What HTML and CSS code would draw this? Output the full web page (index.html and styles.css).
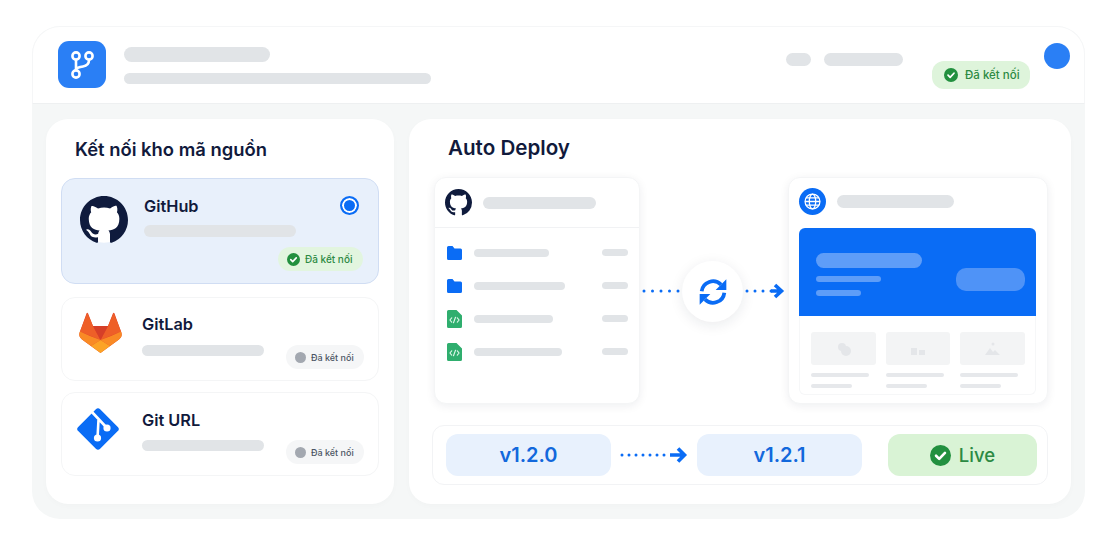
FILE: index.html
```html
<!DOCTYPE html>
<html lang="vi">
<head>
  <meta charset="UTF-8" />
  <meta name="viewport" content="width=device-width, initial-scale=1.0"/>
  <title>Auto Deploy</title>
  <link rel="stylesheet" href="styles.css">
</head>
<body>
  <svg class="sprite" aria-hidden="true">
    <symbol id="octocat" viewBox="0 0 16 16">
      <circle cx="8" cy="8" r="7.6" fill="#fff"/>
      <path fill="#0f1b3d" fill-rule="evenodd" d="M8 0C3.58 0 0 3.58 0 8c0 3.54 2.29 6.53 5.47 7.59.4.07.55-.17.55-.38 0-.19-.01-.82-.01-1.49-2.01.37-2.53-.49-2.69-.94-.09-.23-.48-.94-.82-1.13-.28-.15-.68-.52-.01-.53.63-.01 1.08.58 1.23.82.72 1.21 1.87.87 2.33.66.07-.52.28-.87.51-1.07-1.78-.2-3.64-.89-3.64-3.95 0-.87.31-1.59.82-2.15-.08-.2-.36-1.02.08-2.12 0 0 .67-.21 2.2.82.64-.18 1.32-.27 2-.27.68 0 1.36.09 2 .27 1.53-1.04 2.2-.82 2.2-.82.44 1.1.16 1.92.08 2.12.51.56.82 1.27.82 2.15 0 3.07-1.87 3.75-3.65 3.95.29.25.54.73.54 1.48 0 1.07-.01 1.93-.01 2.2 0 .21.15.46.55.38A8.013 8.013 0 0016 8c0-4.42-3.58-8-8-8z"/>
    </symbol>
    <symbol id="check" viewBox="0 0 16 16">
      <circle cx="8" cy="8" r="8" fill="#22903f"/>
      <path d="M4.6 8.2l2.4 2.4 4.4-4.6" fill="none" stroke="#fff" stroke-width="2" stroke-linecap="round" stroke-linejoin="round"/>
    </symbol>
    <symbol id="folder" viewBox="0 0 15 14">
      <path fill="#0a6cf5" d="M1.5 0h4l2 2.500h6A1.500 1.500 0 0 1 15 4v8.500a1.500 1.500 0 0 1-1.500 1.500h-12A1.500 1.500 0 0 1 0 12.500v-11A1.500 1.500 0 0 1 1.500 0z"/>
    </symbol>
    <symbol id="codefile" viewBox="0 0 15 18">
      <path fill="#2fae6e" d="M1.500 0H9.500L15 5.500V16.500A1.500 1.500 0 0 1 13.500 18H1.500A1.500 1.500 0 0 1 0 16.500V1.500A1.500 1.500 0 0 1 1.500 0z"/>
      <path d="M4.700 7.800L2.900 10l1.800 2.200M10.300 7.800L12.100 10l-1.800 2.200M8.500 7.200L6.500 12.800" fill="none" stroke="#dff7e9" stroke-width="1.100" stroke-linecap="round" stroke-linejoin="round"/>
    </symbol>
  </svg>

  <div class="frame">
    <header class="topbar">
      <div class="logo">
        <svg viewBox="0 0 48 47" width="48" height="47">
          <g fill="none" stroke="#fff" stroke-width="2.600" stroke-linecap="round">
            <circle cx="18" cy="15" r="3.600"/>
            <circle cx="31" cy="15" r="3.600"/>
            <circle cx="18" cy="33" r="3.600"/>
            <path d="M18 19v10M31 19c0 5-3 6-6 6.500-3 .5-6 1-7 2.500"/>
          </g>
        </svg>
      </div>
      <div class="topbar-text">
        <div class="bar bar-title"></div>
        <div class="bar bar-subtitle"></div>
      </div>
      <div class="topbar-right">
        <div class="bar bar-nav-a"></div>
        <div class="bar bar-nav-b"></div>
        <div class="status status-top">
          <svg class="status-icon"><use href="#check"/></svg>
          <span>Đã kết nối</span>
        </div>
        <div class="avatar"></div>
      </div>
    </header>

    <main class="workspace">
      <section class="panel repos">
        <h2 class="repos-title">Kết nối kho mã nguồn</h2>

        <div class="provider provider-active">
          <svg class="provider-icon octo"><use href="#octocat"/></svg>
          <div class="provider-main">
            <div class="provider-name">GitHub</div>
            <div class="bar bar-provider-long"></div>
          </div>
          <div class="provider-side">
            <div class="radio"></div>
            <div class="status status-card">
              <svg class="status-icon"><use href="#check"/></svg>
              <span>Đã kết nối</span>
            </div>
          </div>
        </div>

        <div class="provider provider-lab">
          <svg class="provider-icon tanuki" viewBox="0 0 43 41">
            <path fill="#e24329" d="M7.500 1.500c.3-1 1.200-1 1.600 0L14 14h15l4.900-12.500c.4-1 1.300-1 1.600 0l6.500 18c1.500 3.500.5 6-2 8L21.500 41 3 27.500c-2.500-2-3.500-4.500-2-8z"/>
            <path fill="#ee5f28" d="M8.300.800L14 14l7.500 14L1 19.500zM34.700.800L29 14l-7.500 14L42 19.500z"/>
            <path fill="#d63f28" d="M14 14h15l-7.500 14z"/>
            <path fill="#f98a25" d="M1 19.500l10 4.500 10.500 4L12 34 3 27.500c-2.500-2-3.500-4.500-2-8zM42 19.500L32 24l-10.500 4L31 34l9-6.500c2.500-2 3.500-4.500 2-8z"/>
            <path fill="#fca326" d="M12 34l9.500-6 9.500 6-9.500 7z"/>
          </svg>
          <div class="provider-main">
            <div class="provider-name">GitLab</div>
            <div class="bar bar-provider"></div>
          </div>
          <div class="provider-side">
            <div class="status status-off">
              <span class="status-dot"></span>
              <span>Đã kết nối</span>
            </div>
          </div>
        </div>

        <div class="provider provider-url">
          <svg class="provider-icon gitmark" viewBox="0 0 44 44">
            <rect x="6.500" y="6.500" width="31" height="31" rx="3" fill="#0a6cf5" transform="rotate(45 22 22)"/>
            <path d="M15 4l16 17M22.500 13L21.500 31" fill="none" stroke="#fff" stroke-width="2.600"/>
            <circle cx="31" cy="21" r="3.600" fill="#fff"/>
            <circle cx="21.500" cy="31" r="3.600" fill="#fff"/>
          </svg>
          <div class="provider-main">
            <div class="provider-name">Git URL</div>
            <div class="bar bar-provider"></div>
          </div>
          <div class="provider-side">
            <div class="status status-off">
              <span class="status-dot"></span>
              <span>Đã kết nối</span>
            </div>
          </div>
        </div>
      </section>

      <section class="panel deploy">
        <h2 class="deploy-title">Auto Deploy</h2>

        <div class="pipeline">
          <div class="box repo-box">
            <div class="repo-head">
              <svg class="repo-logo"><use href="#octocat"/></svg>
              <div class="bar bar-repo"></div>
            </div>
            <div class="file-list">
              <div class="file-row">
                <svg class="file-icon"><use href="#folder"/></svg>
                <div class="bar file-name name-a"></div>
                <div class="bar file-meta"></div>
              </div>
              <div class="file-row">
                <svg class="file-icon"><use href="#folder"/></svg>
                <div class="bar file-name name-b"></div>
                <div class="bar file-meta"></div>
              </div>
              <div class="file-row">
                <svg class="file-icon file-code"><use href="#codefile"/></svg>
                <div class="bar file-name name-c"></div>
                <div class="bar file-meta"></div>
              </div>
              <div class="file-row">
                <svg class="file-icon file-code"><use href="#codefile"/></svg>
                <div class="bar file-name name-d"></div>
                <div class="bar file-meta"></div>
              </div>
            </div>
          </div>

          <div class="flow">
            <svg class="flow-dots" viewBox="0 0 40 8">
              <path d="M2 4h36" stroke="#0a6cf5" stroke-width="3" stroke-linecap="round" stroke-dasharray="0 8.500" fill="none"/>
            </svg>
            <div class="sync">
              <svg viewBox="0 0 24 24" width="32" height="32">
                <path d="M3.500 11.500A8.500 8.500 0 0 1 18 6.500M20.500 12.500A8.500 8.500 0 0 1 6 17.500" fill="none" stroke="#0a6cf5" stroke-width="2.800"/>
                <path d="M22 2.500v8h-8zM2 21.500v-8h8z" fill="#0a6cf5"/>
              </svg>
            </div>
            <svg class="flow-arrow" viewBox="0 0 40 16">
              <path d="M2 8h26" stroke="#0a6cf5" stroke-width="3" stroke-linecap="round" stroke-dasharray="0 8" fill="none"/>
              <path d="M26 8h9M30 2l6.500 6-6.500 6" stroke="#0a6cf5" stroke-width="3.600" fill="none"/>
            </svg>
          </div>

          <div class="box site-box">
            <div class="site-head">
              <div class="globe">
                <svg viewBox="0 0 16 16" width="17" height="17">
                  <g fill="none" stroke="#fff" stroke-width="1.200">
                    <circle cx="8" cy="8" r="7"/>
                    <ellipse cx="8" cy="8" rx="3" ry="7"/>
                    <path d="M1 8h14M2 4.500h12M2 11.500h12"/>
                  </g>
                </svg>
              </div>
              <div class="bar bar-site"></div>
            </div>
            <div class="hero">
              <div class="hero-text">
                <div class="hero-bar hero-bar-a"></div>
                <div class="hero-bar hero-bar-b"></div>
                <div class="hero-bar hero-bar-c"></div>
              </div>
              <div class="hero-btn"></div>
            </div>
            <div class="thumbs">
              <div class="thumb">
                <div class="thumb-img">
                  <svg viewBox="0 0 16 14" width="16" height="14"><circle cx="6" cy="5" r="4" fill="#e4e6e9"/><circle cx="10" cy="9" r="5" fill="#e4e6e9"/></svg>
                </div>
                <div class="thumb-line"></div>
                <div class="thumb-line thumb-line-short"></div>
              </div>
              <div class="thumb">
                <div class="thumb-img">
                  <svg viewBox="0 0 16 14" width="16" height="14"><path d="M1 6h6v7H1zM9 8h6v5H9z" fill="#e4e6e9"/></svg>
                </div>
                <div class="thumb-line"></div>
                <div class="thumb-line thumb-line-short"></div>
              </div>
              <div class="thumb">
                <div class="thumb-img">
                  <svg viewBox="0 0 16 14" width="16" height="14"><circle cx="8" cy="2" r="1.500" fill="#e4e6e9"/><path d="M0 13l5-7 3 4 2-2 5 5z" fill="#e4e6e9"/></svg>
                </div>
                <div class="thumb-line"></div>
                <div class="thumb-line thumb-line-short"></div>
              </div>
            </div>
          </div>
        </div>

        <div class="versions">
          <div class="version">v1.2.0</div>
          <svg class="version-arrow" viewBox="0 0 68 16">
            <path d="M2 8h48" stroke="#0a6cf5" stroke-width="3" stroke-linecap="round" stroke-dasharray="0 7" fill="none"/>
            <path d="M50 8h14M58 1.500l6.500 6.500-6.500 6.500" stroke="#0a6cf5" stroke-width="3.600" fill="none"/>
          </svg>
          <div class="version">v1.2.1</div>
          <div class="live">
            <svg class="live-icon"><use href="#check"/></svg>
            <span>Live</span>
          </div>
        </div>
      </section>
    </main>
  </div>
</body>
</html>
```

FILE: styles.css
```css
* {
  margin: 0;
  padding: 0;
  box-sizing: border-box;
}

body {
  font-family: "Inter", "Noto Sans", sans-serif;
  background: #ffffff;
  color: #111a3c;
}

.sprite {
  display: none;
}

.frame {
  width: 1053px;
  height: 493px;
  margin: 26px 0 0 32px;
  background: #f5f7f7;
  border-radius: 28px;
  overflow: hidden;
}

.bar {
  background: #e1e4e7;
  border-radius: 8px;
}

/* top bar */
.topbar {
  display: flex;
  align-items: flex-start;
  height: 78px;
  padding: 14px 14px 0 25px;
  background: #ffffff;
  border: 1px solid #f5f6f7;
  border-bottom: 1px solid #eef0f1;
  border-radius: 28px 28px 0 0;
}

.logo {
  width: 48px;
  height: 47px;
  background: #2a7ff5;
  border-radius: 11px;
}

.topbar-text {
  margin: 6px 0 0 18px;
}

.bar-title {
  width: 146px;
  height: 15px;
}

.bar-subtitle {
  width: 307px;
  height: 11px;
  margin-top: 11px;
}

.topbar-right {
  display: flex;
  align-items: flex-start;
  margin-left: auto;
}

.bar-nav-a {
  width: 25px;
  height: 13px;
  margin-top: 12px;
}

.bar-nav-b {
  width: 79px;
  height: 13px;
  margin: 12px 0 0 13px;
}

.status {
  display: flex;
  align-items: center;
  border-radius: 12px;
  white-space: nowrap;
  font-weight: 500;
}

.status-top {
  width: 98px;
  height: 28px;
  margin: 20px 0 0 29px;
  padding-left: 12px;
  gap: 7px;
  background: #def4db;
  color: #2c8a43;
  font-size: 11.500px;
}

.status-top .status-icon {
  width: 14px;
  height: 14px;
}

.avatar {
  width: 26px;
  height: 26px;
  margin: 2px 0 0 14px;
  background: #2a7ff5;
  border-radius: 50%;
}

/* panels */
.workspace {
  display: grid;
  grid-template-columns: 348px 662px;
  gap: 15px;
  padding: 15px 14px;
}

.panel {
  height: 385px;
  background: #ffffff;
  border-radius: 22px;
  box-shadow: 0 2px 6px rgba(20, 30, 60, 0.02);
}

/* repo list */
.repos {
  padding: 18px 15px 0;
}

.repos-title {
  padding-left: 14px;
  margin-bottom: 17px;
  font-size: 18.400px;
  line-height: 24px;
  font-weight: 600;
}

.provider {
  display: flex;
  align-items: flex-start;
  background: #ffffff;
  border: 1px solid #f4f5f6;
  border-radius: 14px;
}

.provider-active {
  height: 106px;
  padding: 17px 15px 12px 18px;
  margin-bottom: 13px;
  background: #e8f0fb;
  border-color: #d0ddf3;
}

.provider-lab {
  height: 84px;
  padding: 14px 14px 11px 17px;
  margin-bottom: 11px;
}

.provider-url {
  height: 84px;
  padding: 14px 14px 11px 14px;
}

.provider-icon {
  flex: none;
}

.octo {
  width: 48px;
  height: 48px;
  margin-right: 16px;
}

.tanuki {
  width: 43px;
  height: 41px;
  margin-right: 20px;
}

.gitmark {
  width: 44px;
  height: 44px;
  margin-right: 22px;
}

.provider-name {
  font-size: 16.300px;
  line-height: 20px;
  font-weight: 600;
}

/* the long bar runs above the badge, so it takes no room from it */
.provider-active .provider-main {
  margin-right: -18px;
}

.provider-lab .provider-main {
  margin-top: 2px;
}

.provider-url .provider-main {
  margin-top: 3px;
}

.bar-provider-long {
  width: 152px;
  height: 12px;
  margin-top: 9px;
}

.bar-provider {
  width: 122px;
  height: 11px;
  margin-top: 11px;
}

.provider-url .bar-provider {
  margin-top: 10px;
}

.provider-side {
  display: flex;
  flex-direction: column;
  align-items: flex-end;
  justify-content: flex-end;
  height: 100%;
  margin-left: auto;
}

.provider-active .provider-side {
  justify-content: space-between;
}

.radio {
  width: 19px;
  height: 19px;
  margin-right: 4px;
  background: #0a6cf5;
  border: 2.500px solid #0a6cf5;
  box-shadow: inset 0 0 0 2px #ffffff;
  border-radius: 50%;
}

.status-card {
  width: 85px;
  height: 24px;
  padding-left: 9px;
  gap: 5px;
  background: #e2f5df;
  color: #2c8a43;
  font-size: 10px;
}

.status-card .status-icon {
  width: 13px;
  height: 13px;
}

.status-off {
  width: 78px;
  height: 24px;
  padding-left: 9px;
  gap: 5px;
  background: #f5f6f7;
  color: #4b5563;
  font-size: 9px;
}

.status-dot {
  width: 11px;
  height: 11px;
  background: #a3a8b0;
  border-radius: 50%;
}

/* deploy */
.deploy {
  padding: 16px 23px 0 25px;
}

.deploy-title {
  padding-left: 14px;
  margin-bottom: 16px;
  font-size: 20.600px;
  line-height: 26px;
  font-weight: 600;
}

.pipeline {
  display: flex;
  height: 227px;
}

.box {
  flex: none;
  background: #ffffff;
  border: 1px solid #f4f5f6;
  border-radius: 12px;
  box-shadow: 0 2px 10px rgba(20, 30, 60, 0.07);
}

.repo-box {
  width: 206px;
}

.repo-head {
  display: flex;
  align-items: center;
  gap: 11px;
  height: 50px;
  padding-left: 10px;
  border-bottom: 1px solid #f1f2f4;
}

.repo-logo {
  width: 27px;
  height: 27px;
}

.bar-repo {
  width: 113px;
  height: 12px;
}

.file-list {
  padding-top: 8px;
}

.file-row {
  display: flex;
  align-items: center;
  height: 33px;
  padding: 0 11px 0 12px;
}

.file-icon {
  flex: none;
  width: 15px;
  height: 14px;
  margin-right: 12px;
}

.file-code {
  height: 18px;
}

.file-name {
  height: 8px;
}

.name-a { width: 75px; }
.name-b { width: 91px; }
.name-c { width: 79px; }
.name-d { width: 88px; }

.file-meta {
  width: 26px;
  height: 7px;
  margin-left: auto;
}

.flow {
  flex: 1;
  display: flex;
  align-items: center;
  padding-left: 2px;
}

.flow-dots {
  width: 40px;
  height: 8px;
}

.sync {
  display: flex;
  align-items: center;
  justify-content: center;
  flex: none;
  width: 61px;
  height: 61px;
  margin: 2px 2px 0 0;
  background: #ffffff;
  border-radius: 50%;
  box-shadow: 0 3px 14px rgba(20, 30, 60, 0.09);
}

.flow-arrow {
  width: 40px;
  height: 16px;
}

.site-box {
  width: 260px;
  padding: 0 11px 0 10px;
}

.site-head {
  display: flex;
  align-items: center;
  gap: 11px;
  height: 50px;
  padding-bottom: 3px;
}

.globe {
  display: flex;
  align-items: center;
  justify-content: center;
  width: 27px;
  height: 27px;
  background: #0a6cf5;
  border-radius: 50%;
}

.bar-site {
  width: 117px;
  height: 13px;
}

.hero {
  display: flex;
  justify-content: space-between;
  height: 88px;
  padding: 25px 11px 0 17px;
  background: #0a6cf5;
  border-radius: 6px 6px 0 0;
}

.hero-bar {
  background: #5e9df8;
  border-radius: 8px;
  height: 6px;
  margin-bottom: 8px;
}

.hero-bar-a { width: 106px; height: 15px; }
.hero-bar-b { width: 65px; }
.hero-bar-c { width: 45px; }

.hero-btn {
  width: 69px;
  height: 23px;
  margin-top: 15px;
  background: #4f93f7;
  border-radius: 10px;
}

.thumbs {
  display: grid;
  grid-template-columns: 65px 64px 65px;
  gap: 10px;
  height: 79px;
  padding: 16px 10px 0 11px;
  border: 1px solid #f6f7f8;
  border-top: none;
  border-radius: 0 0 6px 6px;
}

.thumb-img {
  display: flex;
  align-items: center;
  justify-content: center;
  height: 33px;
  margin-bottom: 8px;
  background: #f3f4f5;
  border-radius: 3px;
}

.thumb-line {
  width: 58px;
  height: 4px;
  margin-bottom: 7px;
  background: #e6e8eb;
  border-radius: 2px;
}

.thumb-line-short {
  width: 41px;
}

/* version strip */
.versions {
  display: flex;
  align-items: center;
  width: 616px;
  height: 60px;
  margin: 21px 0 0 -2px;
  padding: 0 10px 0 13px;
  background: #ffffff;
  border: 1px solid #f2f3f5;
  border-radius: 12px;
}

.version {
  display: flex;
  align-items: center;
  justify-content: center;
  width: 165px;
  height: 42px;
  background: #e8f1fd;
  border-radius: 12px;
  color: #1268dc;
  font-size: 20px;
  font-weight: 600;
}

.version-arrow {
  flex: none;
  width: 68px;
  height: 16px;
  margin: 0 9px;
}

.live {
  display: flex;
  align-items: center;
  justify-content: center;
  gap: 8px;
  width: 149px;
  height: 42px;
  margin-left: auto;
  background: #d9f3d5;
  border-radius: 12px;
  color: #2c8a43;
  font-size: 18.500px;
  font-weight: 500;
}

.live-icon {
  width: 21px;
  height: 21px;
}
```
